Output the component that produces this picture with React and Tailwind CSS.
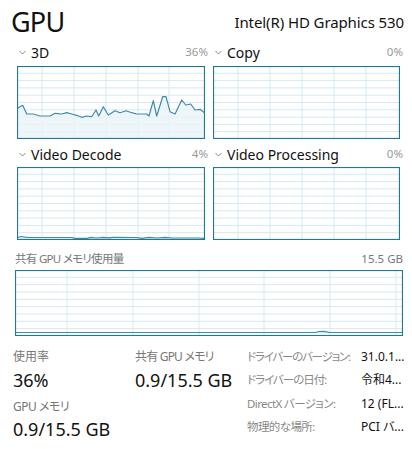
import React from "react";

const BORDER = "#1e7896";
const GRID = "#d6e8f0";
const LINE = "#3f8ba6";
const FILL = "#eaf4f8";

function Graph({ w, h, vlines, rows, points, closeFill = true }) {
  const hs = [];
  for (let i = 1; i < rows; i++) hs.push((h * i) / rows);
  const d = points ? "M" + points.map((p) => p.join(",")).join(" L") : null;
  const fill = points
    ? d + ` L${points[points.length - 1][0]},${h} L${points[0][0]},${h} Z`
    : null;
  return (
    <svg width={w} height={h} className="block">
      {hs.map((y, i) => (
        <line key={"h" + i} x1="0" x2={w} y1={y} y2={y} stroke={GRID} strokeWidth="1" />
      ))}
      {vlines.map((x, i) => (
        <line key={"v" + i} x1={x} x2={x} y1="0" y2={h} stroke={GRID} strokeWidth="1" />
      ))}
      {points && closeFill && <path d={fill} fill={FILL} fillOpacity="0.8" />}
      {points && <path d={d} fill="none" stroke={LINE} strokeWidth="1.2" strokeLinejoin="round" />}
      <rect x="0.5" y="0.5" width={w - 1} height={h - 1} fill="none" stroke={BORDER} strokeWidth="1.2" />
    </svg>
  );
}

function Chevron() {
  return (
    <svg width="7" height="5" viewBox="0 0 7 5" className="mr-[5px] mt-[1px]">
      <polyline points="0.5,1 3.5,4 6.5,1" fill="none" stroke="#777" strokeWidth="0.9" />
    </svg>
  );
}

function Panel({ title, pct, children }) {
  return (
    <div className="flex flex-col">
      <div className="flex items-center justify-between h-[20px] pl-[2px] -mr-[3px]">
        <div className="flex items-center">
          <Chevron />
          <span className="text-[14px] text-[#111]">{title}</span>
        </div>
        <span className="text-[11.5px] text-[#999]">{pct}</span>
      </div>
      {children}
    </div>
  );
}

const pts3d = [
  [0.5, 42.3], [5.7, 39.3], [9.7, 48], [16.3, 48], [23, 50], [33, 50], [38, 47.3],
  [44.7, 48], [49.7, 46.7], [54.7, 48], [59.7, 49.3], [64.7, 51.3], [69.7, 50],
  [74.7, 50.7], [79, 44], [81.7, 50], [86.3, 40.7], [91.3, 49], [98, 44.7],
  [103, 46.7], [109, 44.7], [114.7, 46.7], [119.7, 48], [129.7, 48], [132, 50],
  [136.3, 34.7], [139.7, 50], [145.7, 30.7], [149, 30.7], [153, 45.7], [158, 48],
  [164.7, 34], [168.7, 39], [173.7, 38], [178, 44], [183, 43.3], [187.5, 46.7],
];

const ptsDecode = [
  [0.5, 70.5], [4, 69.5], [8, 70.2], [12, 70.5], [55, 70.5], [58, 71.3], [70, 71.3],
  [74, 70.3], [80, 71], [86, 70.3], [92, 70.8], [96, 70.3], [120, 70.5], [125, 71.3],
  [132, 70.4], [140, 71], [148, 70.4], [155, 71], [182, 71], [187.5, 71.3],
];

const ptsShared = [
  [0.5, 62.5], [300, 62.5], [304, 61.6], [309, 61.3], [314, 62.3], [387.5, 62.5],
];

export default function App() {
  return (
    <div
      className="w-[412px] h-[449px] bg-white overflow-hidden relative text-[#111] [font-feature-settings:'palt']"
      style={{ fontFamily: "'Noto Sans', 'Noto Sans CJK JP', sans-serif" }}
    >
      {/* header */}
      <div className="flex items-end justify-between pl-[11px] pr-[8px] pt-[0px] h-[40px]">
        <span className="text-[27px] leading-[36px] tracking-[-0.8px]">GPU</span>
        <span className="text-[15px] leading-[20px] mb-[8px] tracking-[-0.1px]">Intel(R) HD Graphics 530</span>
      </div>

      {/* engines */}
      <div className="grid grid-cols-[188px_187px] gap-x-[8px] pl-[17px] mt-[2px]">
        <Panel title="3D" pct="36%">
          <div className="mt-[4px]">
            <Graph w={188} h={73} vlines={[25, 57, 89, 121, 152]} rows={10} points={pts3d} />
          </div>
        </Panel>
        <Panel title="Copy" pct="0%">
          <div className="mt-[4px]">
            <Graph w={187} h={73} vlines={[25, 57, 89, 121, 153]} rows={10} />
          </div>
        </Panel>
        <div className="mt-[5px]">
          <Panel title="Video Decode" pct="4%">
            <div className="mt-[3px]">
              <Graph w={188} h={73} vlines={[25, 57, 89, 121, 152]} rows={10} points={ptsDecode} />
            </div>
          </Panel>
        </div>
        <div className="mt-[5px]">
          <Panel title="Video Processing" pct="0%">
            <div className="mt-[3px]">
              <Graph w={187} h={73} vlines={[25, 57, 89, 121, 153]} rows={10} />
            </div>
          </Panel>
        </div>
      </div>

      {/* shared memory */}
      <div className="pl-[15px] pr-[9px] mt-[11px]">
        <div className="flex items-center justify-between h-[16px] text-[11.5px] text-[#777]">
          <span className="tracking-[-0.7px]">共有 GPU メモリ使用量</span>
          <span>15.5 GB</span>
        </div>
        <div className="mt-[3px]">
          <Graph w={388} h={66} vlines={[52, 118, 184, 249, 315, 381]} rows={9} points={ptsShared} closeFill={false} />
        </div>
      </div>

      {/* stats */}
      <div className="flex pl-[13px] mt-[13px]">
        <div className="w-[122px] flex flex-col">
          <span className="text-[12px] leading-[16px] text-[#777]">使用率</span>
          <span className="text-[18px] leading-[24px] mt-[3px]">36%</span>
          <span className="text-[12px] leading-[16px] text-[#777] mt-[7px] tracking-[-0.5px]">GPU メモリ</span>
          <span className="text-[18px] leading-[24px] mt-[2px]">0.9/15.5 GB</span>
        </div>
        <div className="w-[112px] flex flex-col">
          <span className="text-[12px] leading-[16px] text-[#777] whitespace-nowrap tracking-[-0.8px]">共有 GPU メモリ</span>
          <span className="text-[18px] leading-[24px] mt-[3px] whitespace-nowrap">0.9/15.5 GB</span>
        </div>
        <div className="grid grid-cols-[114px_auto] text-[12px] leading-[17.7px] -mt-[1px] whitespace-nowrap">
          <span className="text-[#888] text-[11.5px] tracking-[-1.2px]">ドライバーのバージョン:</span>
          <span>31.0.1...</span>
          <span className="text-[#888] text-[11.5px] tracking-[-1px]">ドライバーの日付:</span>
          <span>令和4...</span>
          <span className="text-[#888] text-[11.5px] tracking-[-0.6px]">DirectX バージョン:</span>
          <span>12 (FL...</span>
          <span className="text-[#888] text-[11.5px] tracking-[-0.6px]">物理的な場所:</span>
          <span>PCI バ...</span>
        </div>
      </div>
    </div>
  );
}
